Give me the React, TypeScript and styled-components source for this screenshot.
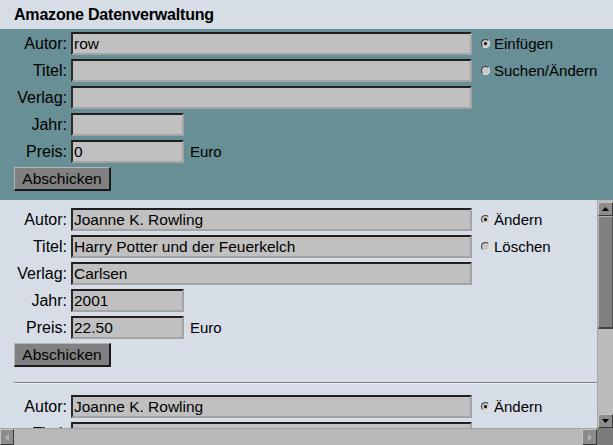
import React from "react";
import styled, { createGlobalStyle } from "styled-components";

const Global = createGlobalStyle`
  html, body { margin: 0; padding: 0; background: #d6dde6; }
  body { font-family: "Liberation Sans", Arial, sans-serif; font-size: 15px; color: #000; }
  * { box-sizing: border-box; }
`;

const Page = styled.div`
  width: 613px;
  height: 445px;
  display: flex;
  flex-direction: column;
  overflow: hidden;
  background: #d6dde6;
`;

const Header = styled.h1`
  margin: 0;
  height: 29px;
  padding: 0 0 0 14px;
  display: flex;
  align-items: center;
  font-size: 16px;
  font-weight: bold;
  letter-spacing: -0.2px;
  background: #d6dde6;
`;

const Panel = styled.section<{ $tone: "teal" | "plain" }>`
  background: ${(p) => (p.$tone === "teal" ? "#688f95" : "#d6dde6")};
  padding: ${(p) => (p.$tone === "teal" ? "3px 0 9px" : "8px 0 0")};
`;

const Record = styled.form`
  display: flex;
  align-items: flex-start;
`;

const Fields = styled.div`
  display: grid;
  grid-template-columns: 67px auto;
  column-gap: 4px;
  row-gap: 4px;
  width: 472px;
`;

const Label = styled.label`
  text-align: right;
  height: 23px;
  line-height: 23px;
  font-size: 16px;
  white-space: nowrap;
`;

const Cell = styled.div`
  display: flex;
  align-items: center;
  gap: 6px;
`;

const Field = styled.input<{ $short?: boolean }>`
  width: ${(p) => (p.$short ? "113px" : "401px")};
  height: 23px;
  margin: 0;
  padding: 0 0 0 1px;
  background: #c0c0c0;
  border-style: solid;
  border-width: 2px;
  border-color: #1f1f1f #a4a4a4 #a4a4a4 #2a2a2a;
  font-family: inherit;
  font-size: 15.5px;
  color: #000;
  outline: none;
`;

const Unit = styled.span`
  line-height: 23px;
`;

const SubmitRow = styled.div`
  display: flex;
  padding: 4px 0 0 14px;
`;

const Submit = styled.button`
  width: 97px;
  height: 24px;
  padding: 0;
  background: #808080;
  border-style: solid;
  border-width: 1px 2px 2px 1px;
  border-color: #b4b4b4 #1a1a1a #1a1a1a #b4b4b4;
  font-family: inherit;
  font-size: 15.5px;
  color: #000;
  cursor: default;
`;

const Options = styled.div`
  display: flex;
  flex-direction: column;
  gap: 4px;
  margin-left: 9px;
`;

const Option = styled.label`
  display: flex;
  align-items: center;
  height: 23px;
  gap: 4px;
  white-space: nowrap;
`;

const Radio = styled.span<{ $on?: boolean }>`
  width: 9px;
  height: 9px;
  border-radius: 50%;
  background: #c8c8c8;
  border: 1px solid;
  border-color: #3c3c3c #e6e6e6 #e6e6e6 #3c3c3c;
  display: flex;
  align-items: center;
  justify-content: center;
  &::after {
    content: "";
    width: 3px;
    height: 3px;
    border-radius: 50%;
    background: ${(p) => (p.$on ? "#000" : "transparent")};
  }
`;

const Separator = styled.hr`
  margin: 15px 0 11px 14px;
  border: none;
  border-top: 1px solid #7c7c7c;
  border-bottom: 1px solid #eef2f6;
  height: 0;
`;

const ScrollFrame = styled.div`
  flex: 1;
  min-height: 0;
  display: grid;
  grid-template-columns: 1fr 16px;
  grid-template-rows: 1fr 17px;
`;

const Viewport = styled.div`
  overflow: hidden;
  min-height: 0;
`;

const VBar = styled.div`
  display: flex;
  flex-direction: column;
  background: #bcbcbc;
  border-left: 1px solid #a8a8a8;
  padding-top: 2px;
`;

const HBar = styled.div`
  display: flex;
  background: #b8b8b8;
  border-top: 1px solid #a4a4a4;
`;

const ArrowBox = styled.div<{ $w?: number }>`
  width: ${(p) => (p.$w ? `${p.$w}px` : "100%")};
  height: ${(p) => (p.$w ? "100%" : "14px")};
  flex: none;
  background: #8c8c8c;
  border-style: solid;
  border-width: 1px;
  border-color: #c4c4c4 #3a3a3a #3a3a3a #c4c4c4;
  display: flex;
  align-items: center;
  justify-content: center;
`;

const Thumb = styled.div`
  height: 113px;
  flex: none;
  background: #808080;
  border-style: solid;
  border-width: 1px 1px 2px 1px;
  border-color: #b0b0b0 #505050 #404040 #b0b0b0;
`;

const Track = styled.div`
  flex: 1;
`;

const Corner = styled.div`
  background: #7c7c7c;
`;

type Dir = "up" | "down" | "left" | "right";

const Arrow = ({ dir, dim }: { dir: Dir; dim?: boolean }) => {
  const pts: Record<Dir, string> = {
    up: "0,4 7,4 3.5,0",
    down: "0,0 7,0 3.5,4",
    left: "4,0 4,7 0,3.5",
    right: "0,0 0,7 4,3.5",
  };
  const vertical = dir === "up" || dir === "down";
  return (
    <svg width={vertical ? 7 : 4} height={vertical ? 4 : 7} viewBox={vertical ? "0 0 7 4" : "0 0 4 7"}>
      <polygon points={pts[dir]} fill={dim ? "#b4b4b4" : "#000"} />
    </svg>
  );
};

type Book = {
  autor: string;
  titel: string;
  verlag: string;
  jahr: string;
  preis: string;
};

const RecordForm = ({ book, options }: { book: Book; options: [string, string] }) => (
  <>
    <Record onSubmit={(e) => e.preventDefault()}>
      <Fields>
        <Label>Autor:</Label>
        <Cell>
          <Field readOnly value={book.autor} />
        </Cell>
        <Label>Titel:</Label>
        <Cell>
          <Field readOnly value={book.titel} />
        </Cell>
        <Label>Verlag:</Label>
        <Cell>
          <Field readOnly value={book.verlag} />
        </Cell>
        <Label>Jahr:</Label>
        <Cell>
          <Field $short readOnly value={book.jahr} />
        </Cell>
        <Label>Preis:</Label>
        <Cell>
          <Field $short readOnly value={book.preis} />
          <Unit>Euro</Unit>
        </Cell>
      </Fields>
      <Options>
        <Option>
          <Radio $on />
          {options[0]}
        </Option>
        <Option>
          <Radio />
          {options[1]}
        </Option>
      </Options>
    </Record>
    <SubmitRow>
      <Submit type="button">Abschicken</Submit>
    </SubmitRow>
  </>
);

const books: Book[] = [
  { autor: "Joanne K. Rowling", titel: "Harry Potter und der Feuerkelch", verlag: "Carlsen", jahr: "2001", preis: "22.50" },
  { autor: "Joanne K. Rowling", titel: "Harry Potter und der Gefangene von Askaban", verlag: "Carlsen", jahr: "2000", preis: "14.50" },
];

export default function App() {
  return (
    <Page>
      <Global />
      <Header>Amazone Datenverwaltung</Header>
      <Panel $tone="teal">
        <RecordForm
          book={{ autor: "row", titel: "", verlag: "", jahr: "", preis: "0" }}
          options={["Einfügen", "Suchen/Ändern"]}
        />
      </Panel>
      <ScrollFrame>
        <Viewport>
          <Panel $tone="plain">
            {books.map((b, i) => (
              <React.Fragment key={i}>
                {i > 0 && <Separator />}
                <RecordForm book={b} options={["Ändern", "Löschen"]} />
              </React.Fragment>
            ))}
          </Panel>
        </Viewport>
        <VBar>
          <ArrowBox>
            <Arrow dir="up" />
          </ArrowBox>
          <Thumb />
          <Track />
          <ArrowBox>
            <Arrow dir="down" />
          </ArrowBox>
        </VBar>
        <HBar>
          <ArrowBox $w={14}>
            <Arrow dir="left" dim />
          </ArrowBox>
          <Track />
          <ArrowBox $w={15}>
            <Arrow dir="right" dim />
          </ArrowBox>
        </HBar>
        <Corner />
      </ScrollFrame>
    </Page>
  );
}
